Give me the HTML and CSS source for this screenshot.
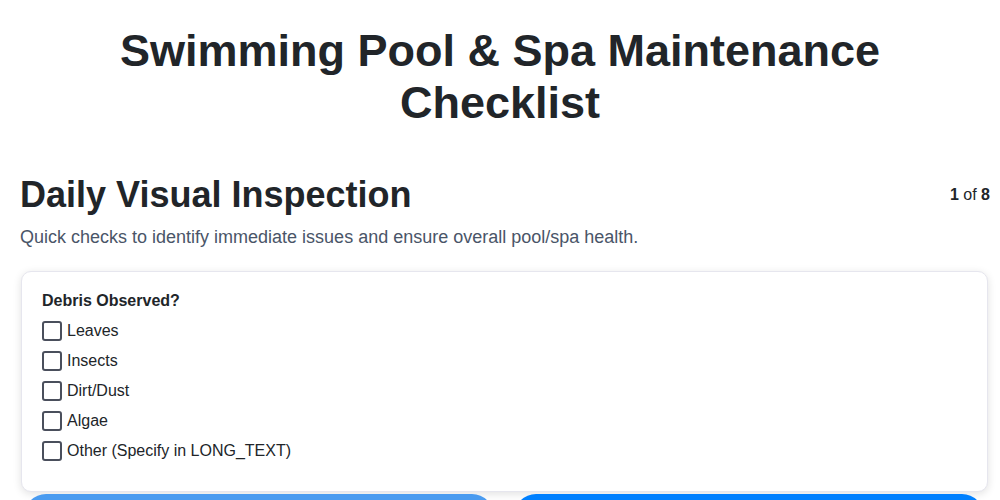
FILE: index.html
```html
<!DOCTYPE html>
<html lang="en">
<head>
<meta charset="utf-8">
<title>Swimming Pool &amp; Spa Maintenance Checklist</title>
<link rel="stylesheet" href="styles.css">
</head>
<body>
<h1 class="page-title">Swimming Pool &amp; Spa Maintenance Checklist</h1>
<main class="wizard">
  <div class="step-header">
    <h2 class="step-title">Daily Visual Inspection</h2>
    <div class="step-count"><b>1</b> of <b>8</b></div>
  </div>
  <p class="step-desc">Quick checks to identify immediate issues and ensure overall pool/spa health.</p>
  <section class="card">
    <div class="field-label">Debris Observed?</div>
    <ul class="options">
      <li class="option"><span class="box"></span>Leaves</li>
      <li class="option"><span class="box"></span>Insects</li>
      <li class="option"><span class="box"></span>Dirt/Dust</li>
      <li class="option"><span class="box"></span>Algae</li>
      <li class="option"><span class="box"></span>Other (Specify in LONG_TEXT)</li>
    </ul>
  </section>
  <div class="nav">
    <button class="btn btn-prev">Previous</button>
    <button class="btn btn-next">Next</button>
  </div>
</main>
</body>
</html>
```
FILE: styles.css
```css
html, body {
  margin: 0;
  padding: 0;
  background: #ffffff;
  font-family: "Liberation Sans", Arial, sans-serif;
  color: #212529;
}
.page-title {
  max-width: 820px;
  margin: 0 auto;
  padding-top: 25px;
  font-size: 45px;
  line-height: 52px;
  font-weight: 700;
  text-align: center;
  color: #212529;
}
.wizard {
  padding: 0 10px 20px 20px;
}
.step-header {
  display: flex;
  justify-content: space-between;
  align-items: center;
  margin-top: 42px;
}
.step-title {
  margin: 0;
  font-size: 36px;
  line-height: 48px;
  font-weight: 700;
}
.step-count {
  font-size: 16px;
  color: #212529;
}
.step-desc {
  margin: 6px 0 22px;
  font-size: 18px;
  line-height: 24px;
  color: #4a5568;
}
.card {
  margin-left: 1px;
  margin-right: 2px;
  border: 1px solid #e6e6ee;
  border-radius: 10px;
  box-shadow: 0 2px 8px rgba(0, 0, 0, 0.12);
  padding: 19px 20px 25px;
  background: #fff;
}
.field-label {
  font-size: 16px;
  font-weight: 700;
  line-height: 20px;
  margin-bottom: 5px;
}
.options {
  list-style: none;
  margin: 0;
  padding: 0;
}
.option {
  display: flex;
  align-items: center;
  height: 30px;
  font-size: 16px;
}
.box {
  width: 16px;
  height: 16px;
  border: 2px solid #4a4f5c;
  border-radius: 3px;
  margin-right: 5px;
  flex: none;
}
.nav {
  display: grid;
  grid-template-columns: 1fr 1fr;
  gap: 20px;
  margin-top: 2px;
  padding: 0 6px 0 4px;
}
.btn {
  height: 48px;
  border: none;
  border-radius: 22px;
  color: #fff;
  font-family: inherit;
  font-size: 18px;
  font-weight: 700;
}
.btn-prev {
  background: #4a9bf0;
}
.btn-next {
  background: #0080ff;
}
```
